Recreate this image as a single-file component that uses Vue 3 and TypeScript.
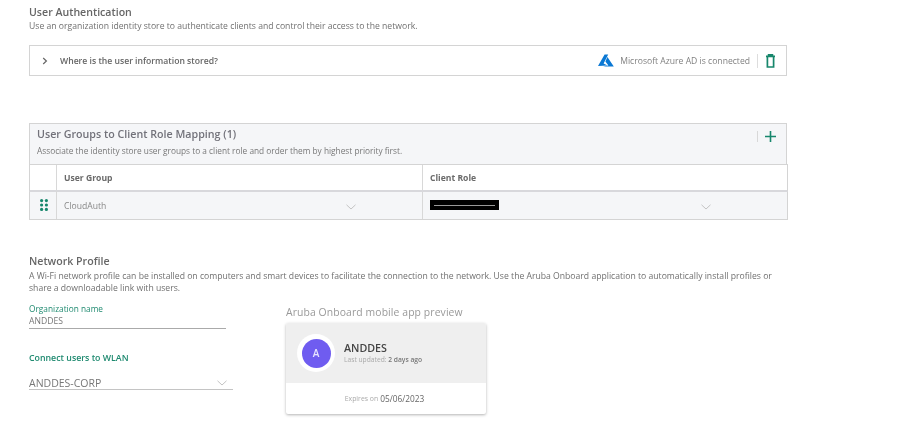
<script setup lang="ts">
const azure = 'Microsoft Azure AD is connected'
</script>

<template>
  <main class="page">
    <section class="auth">
      <h2 class="title">User Authentication</h2>
      <p class="desc">Use an organization identity store to authenticate clients and control their access to the network.</p>
      <div class="store">
        <svg class="caret" width="8" height="8" viewBox="0 0 8 8"><path d="M2.2 1 5.4 4 2.2 7" fill="none" stroke="#666" stroke-width="1.2" /></svg>
        <span class="question">Where is the user information stored?</span>
        <span class="status">
          <svg class="azure" width="16" height="13" viewBox="0 0 16 13">
            <path d="M6.6 0.5 10.2 0.5 5.6 9.5 9.6 11.6 0 12 Z" fill="#0a78d4" />
            <path d="M9.4 3 15.8 12.6 5 12.6 10.4 11.6 7.4 7.4 Z" fill="#0a78d4" />
          </svg>
          <span>{{ azure }}</span>
        </span>
        <span class="divider"></span>
        <svg class="trash" width="9" height="14" viewBox="0 0 9 14">
          <path d="M0 2.4H9M2.6 2.4V0.9H6.4V2.4M1.4 2.8V13H7.6V2.8" fill="none" stroke="#17876c" stroke-width="1.7" />
        </svg>
      </div>
    </section>

    <section class="mapping">
      <header class="map-head">
        <div>
          <h3 class="map-title">User Groups to Client Role Mapping (1)</h3>
          <p class="map-desc">Associate the identity store user groups to a client role and order them by highest priority first.</p>
        </div>
        <div class="map-action">
          <span class="divider short"></span>
          <svg width="11" height="11" viewBox="0 0 11 11"><path d="M5.5 0V11M0 5.5H11" stroke="#17876c" stroke-width="1.6" /></svg>
        </div>
      </header>
      <div class="row head-row">
        <div class="handle"></div>
        <div class="cell">User Group</div>
        <div class="cell">Client Role</div>
      </div>
      <div class="row body-row">
        <div class="handle">
          <svg class="grip" width="8" height="12" viewBox="0 0 8 12" fill="#17876c">
            <circle cx="1.6" cy="1.6" r="1.6" /><circle cx="6.4" cy="1.6" r="1.6" />
            <circle cx="1.6" cy="6" r="1.6" /><circle cx="6.4" cy="6" r="1.6" />
            <circle cx="1.6" cy="10.4" r="1.6" /><circle cx="6.4" cy="10.4" r="1.6" />
          </svg>
        </div>
        <div class="cell value">
          <span>CloudAuth</span>
          <svg class="chev chev-a" width="10" height="6" viewBox="0 0 10 6"><path d="M0.5 0.8 5 5 9.5 0.8" fill="none" stroke="#c4c4c4" /></svg>
        </div>
        <div class="cell value">
          <span class="redacted"><i></i></span>
          <svg class="chev chev-b" width="10" height="6" viewBox="0 0 10 6"><path d="M0.5 0.8 5 5 9.5 0.8" fill="none" stroke="#c4c4c4" /></svg>
        </div>
      </div>
    </section>

    <section class="profile">
      <h2 class="title">Network Profile</h2>
      <p class="desc wrap">A Wi-Fi network profile can be installed on computers and smart devices to facilitate the connection to the network. Use the Aruba Onboard application to automatically install profiles or share a downloadable link with users.</p>
      <div class="profile-body">
        <div class="form">
          <label class="org-label">Organization name</label>
          <div class="org-input">ANDDES</div>
          <label class="wlan-label">Connect users to WLAN</label>
          <div class="wlan-select">
            <span>ANDDES-CORP</span>
            <svg width="10" height="6" viewBox="0 0 10 6"><path d="M0.5 0.8 5 5 9.5 0.8" fill="none" stroke="#c4c4c4" /></svg>
          </div>
        </div>
        <div class="preview">
          <div class="preview-title">Aruba Onboard mobile app preview</div>
          <div class="card">
            <div class="card-top">
              <div class="avatar"><span>A</span></div>
              <div>
                <div class="org">ANDDES</div>
                <div class="updated">Last updated: <b>2 days ago</b></div>
              </div>
            </div>
            <div class="card-bottom">Expires on <b>05/06/2023</b></div>
          </div>
        </div>
      </div>
    </section>
  </main>
</template>

<style scoped>
.page {
  width: 915px;
  height: 430px;
  box-sizing: border-box;
  padding: 5px 128px 0 29px;
  background: #fff;
  font-family: "Open Sans", "Liberation Sans", sans-serif;
  color: #666;
  overflow: hidden;
  filter: blur(0.45px);
}
h2, h3, p { margin: 0; }
.title {
  font-size: 10.6px;
  line-height: 14px;
  font-weight: 600;
  color: #666;
}
.desc {
  font-size: 8.65px;
  line-height: 12px;
  margin-top: 1px;
  color: #707070;
}
.store {
  display: flex;
  align-items: center;
  height: 31px;
  box-sizing: border-box;
  margin-top: 13px;
  border: 1px solid #d4d4d4;
  padding: 0 11px 0 11px;
}
.caret { margin-right: 11px; }
.question { font-size: 8.65px; font-weight: 600; color: #666; }
.status {
  margin-left: auto;
  display: flex;
  align-items: center;
  gap: 6px;
  font-size: 8.6px;
  color: #808080;
}
.divider {
  width: 1px;
  height: 14px;
  background: #ddd;
  margin: 0 8px 0 7px;
}
.divider.short { height: 11px; margin: 0 7px 0 0; background: #d8d8d8; }
.mapping {
  margin-top: 47px;
  width: 758px;
}
.map-head {
  display: flex;
  justify-content: space-between;
  height: 41px;
  box-sizing: border-box;
  background: #f5f6f8;
  border: 1px solid #d4d4d4;
  border-bottom: 0;
  padding: 3px 10px 0 7px;
}
.map-title {
  font-size: 10.7px;
  line-height: 15px;
  font-weight: 600;
  color: #72727a;
}
.map-desc {
  font-size: 8.3px;
  line-height: 12px;
  margin-top: 3px;
  color: #777;
}
.map-action { display: flex; align-items: center; height: 11px; margin-top: 4px; }
.row {
  display: grid;
  grid-template-columns: 27px 366px 1fr;
  margin-right: -1px;
  border: 1px solid #d4d4d4;
  border-top: 0;
}
.head-row {
  height: 28px;
  padding-top: 1px;
  background: #fff;
  border-top: 1px solid #d4d4d4;
  border-bottom: 2px solid #d8d8dc;
  box-sizing: border-box;
  font-size: 8.6px;
  font-weight: 700;
  color: #6a6a6a;
}
.body-row {
  height: 28px;
  box-sizing: border-box;
  background: #f5f6f8;
}
.handle {
  display: flex;
  align-items: center;
  justify-content: center;
  margin-top: -1px;
  border-right: 1px solid #d8d8d8;
}
.head-row .handle, .head-row .cell { margin-top: -1px; }
.grip { margin-left: 2px; }
.cell {
  display: flex;
  align-items: center;
  padding-left: 7px;
  border-right: 1px solid #d8d8d8;
}
.cell:last-child { border-right: 0; }
.value {
  position: relative;
  font-size: 8.6px;
  color: #888;
}
.chev { position: absolute; top: 12px; }
.chev-a { left: 289px; }
.chev-b { left: 278px; }
.redacted {
  display: flex;
  align-items: center;
  width: 69px;
  height: 10px;
  background: #000;
  margin-top: -1px;
  padding: 0 4px;
  box-sizing: border-box;
}
.redacted i { display: block; width: 100%; border-top: 1px solid #999; }
.profile { margin-top: 34px; }
.wrap { width: 758px; line-height: 12px; margin-top: 2px; }
.profile-body { display: flex; }
.form { width: 257px; flex: none; }
.org-label {
  display: block;
  margin-top: 9px;
  font-size: 8.3px;
  line-height: 12px;
  color: #1f8a70;
}
.org-input {
  width: 197px;
  height: 13px;
  font-size: 8.6px;
  line-height: 13px;
  border-bottom: 1px solid #aaa;
  color: #777;
}
.wlan-label {
  display: block;
  margin-top: 23px;
  font-size: 8.8px;
  font-weight: 600;
  line-height: 12px;
  color: #1f8a70;
}
.wlan-select {
  width: 204px;
  height: 14px;
  margin-top: 12px;
  display: flex;
  align-items: center;
  justify-content: space-between;
  padding: 0 6px 0 0;
  box-sizing: border-box;
  border-bottom: 1px solid #c4c4c4;
  font-size: 10.5px;
  color: #777;
}
.preview-title {
  font-size: 10.4px;
  line-height: 14px;
  letter-spacing: 0.1px;
  margin-top: 11px;
  color: #999;
}
.card {
  width: 200px;
  margin-top: 4px;
  background: #fff;
  border-radius: 2px;
  box-shadow: 0 1px 3px rgba(0, 0, 0, 0.3);
}
.card-top {
  height: 60px;
  background: #efefef;
  display: flex;
  align-items: center;
  gap: 9px;
  padding-left: 11px;
  border-radius: 2px 2px 0 0;
}
.avatar {
  width: 38px;
  height: 38px;
  border-radius: 50%;
  background: #fff;
  display: flex;
  align-items: center;
  justify-content: center;
  flex: none;
}
.avatar span {
  width: 29px;
  height: 29px;
  border-radius: 50%;
  background: #6f5cf0;
  color: #e8e4ff;
  font-size: 10px;
  font-weight: 600;
  display: flex;
  align-items: center;
  justify-content: center;
}
.org { font-size: 10.7px; font-weight: 600; line-height: 13px; color: #444; }
.updated { font-size: 6.7px; line-height: 9px; color: #aaa; }
.updated b { font-weight: 600; color: #777; }
.card-bottom {
  height: 31px;
  padding-right: 3px;
  box-sizing: border-box;
  display: flex;
  align-items: center;
  justify-content: center;
  gap: 2px;
  font-size: 6.9px;
  color: #aaa;
}
.card-bottom b { font-weight: 400; font-size: 8.3px; color: #666; }
</style>
